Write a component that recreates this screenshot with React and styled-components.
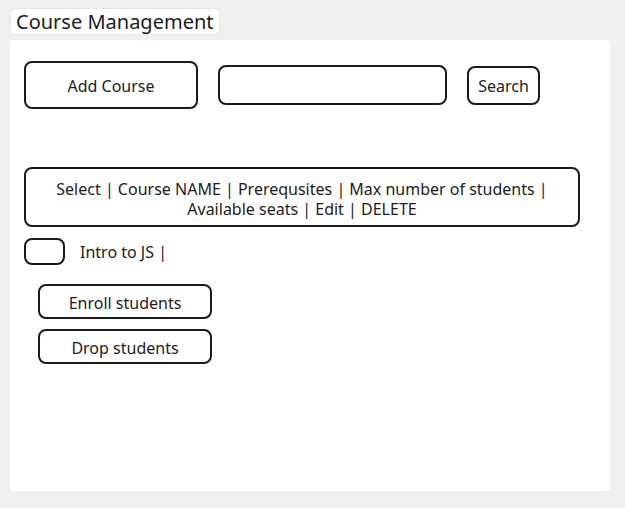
import React from "react";
import styled, { createGlobalStyle } from "styled-components";

const GlobalStyle = createGlobalStyle`
  body {
    margin: 0;
    background: #efefef;
    font-family: "Noto Sans", "Open Sans", sans-serif;
    color: #1c1c1c;
  }
`;

const Page = styled.div`
  padding: 8px 15px 17px 10px;
  display: flex;
  flex-direction: column;
  align-items: flex-start;
  gap: 5px;
`;

const Title = styled.h1`
  margin: 0;
  background: #fff;
  border: 1px solid #e6e6e6;
  border-radius: 5px;
  font-size: 20px;
  font-weight: 400;
  line-height: 25px;
  padding: 0 5px;
`;

const Panel = styled.main`
  align-self: stretch;
  background: #fff;
  border-radius: 4px;
  height: 451px;
  box-sizing: border-box;
  padding: 21px 14px;
  display: flex;
  flex-direction: column;
  align-items: flex-start;
`;

const Toolbar = styled.div`
  display: flex;
  align-items: center;
  gap: 20px;
`;

const Button = styled.button`
  font-family: inherit;
  font-size: 16px;
  color: inherit;
  background: #fff;
  border: 2px solid #1a1a1a;
  border-radius: 8px;
  width: ${(p) => p.$w}px;
  height: ${(p) => p.$h}px;
  padding: 2px 0 0;
`;

const SearchInput = styled.input`
  width: 229px;
  height: 40px;
  box-sizing: border-box;
  border: 2px solid #1a1a1a;
  border-radius: 8px;
  font-family: inherit;
  font-size: 16px;
`;

const HeaderRow = styled.div`
  margin-top: 58px;
  width: 556px;
  height: 60px;
  box-sizing: border-box;
  border: 2px solid #1a1a1a;
  border-radius: 8px;
  display: flex;
  align-items: center;
  justify-content: center;
  text-align: center;
  font-size: 16px;
  line-height: 20px;
  padding: 3px 20px 0;
`;

const CourseRow = styled.div`
  margin-top: 11px;
  display: flex;
  align-items: center;
  gap: 15px;
  font-size: 16px;
`;

const Check = styled.span`
  width: 41px;
  height: 27px;
  box-sizing: border-box;
  border: 2px solid #1a1a1a;
  border-radius: 8px;
`;

const Actions = styled.div`
  margin: 19px 0 0 14px;
  display: flex;
  flex-direction: column;
  gap: 10px;
`;

export default function App() {
  return (
    <>
      <GlobalStyle />
      <Page>
        <Title>Course Management</Title>
        <Panel>
          <Toolbar>
            <Button $w={174} $h={48}>Add Course</Button>
            <SearchInput type="text" />
            <Button $w={73} $h={39}>Search</Button>
          </Toolbar>
          <HeaderRow>
            Select | Course NAME | Prerequsites | Max number of students |
            Available seats | Edit | DELETE
          </HeaderRow>
          <CourseRow>
            <Check />
            <span>Intro to JS |</span>
          </CourseRow>
          <Actions>
            <Button $w={174} $h={35}>Enroll students</Button>
            <Button $w={174} $h={35}>Drop students</Button>
          </Actions>
        </Panel>
      </Page>
    </>
  );
}
